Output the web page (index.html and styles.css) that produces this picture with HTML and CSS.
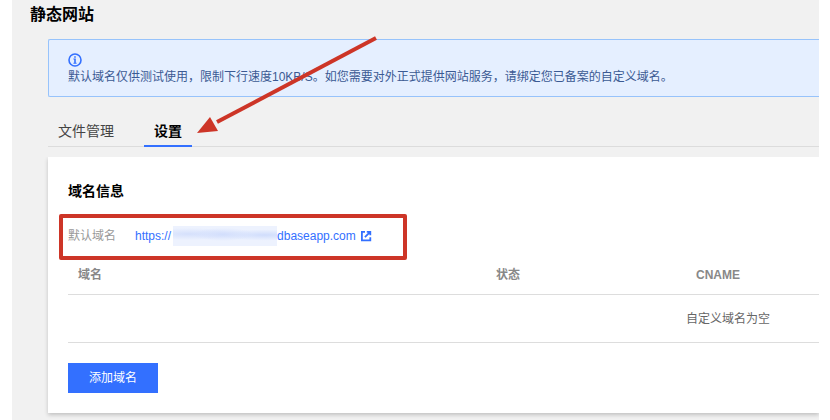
FILE: index.html
```html
<!DOCTYPE html>
<html lang="zh-CN">
<head>
<meta charset="utf-8">
<title>静态网站</title>
<link rel="stylesheet" href="styles.css">
</head>
<body>
<main class="page">
  <h1 class="page-title">静态网站</h1>
  <div class="content">
    <div class="notice">
      <svg class="notice-icon" viewBox="0 0 14 14" aria-hidden="true">
        <circle cx="7" cy="7" r="6" fill="none" stroke="#3370ff" stroke-width="1.6"/>
        <path d="M6.2 3.2h1.6v1.5H6.2zM5.4 5.6h2.4v4.2h.8v.9H5.4v-.9h.8V6.5h-.8z" fill="#3370ff"/>
      </svg>
      <p class="notice-text">默认域名仅供测试使用，限制下行速度10KB/S。如您需要对外正式提供网站服务，请绑定您已备案的自定义域名。</p>
    </div>
    <nav class="tabs">
      <a class="tab" href="#files">文件管理</a>
      <a class="tab active" href="#settings" aria-current="page">设置</a>
    </nav>
    <section class="card" id="settings">
      <h2 class="card-title">域名信息</h2>
      <div class="domain">
        <span class="domain-label">默认域名</span>
        <a class="domain-link" href="#domain">https://<span class="redacted"></span>dbaseapp.com<svg class="external" viewBox="0 0 12 12" aria-hidden="true"><path d="M5 1.8H1.9v8.5h8.4V7.2M6.8 1.8h3.5v3.5M10 2.1 4.9 7.2" fill="none" stroke="#3370ff" stroke-width="1.8"/></svg></a>
        <span class="highlight"></span>
      </div>
      <table class="domains">
        <thead>
          <tr><th class="col-domain">域名</th><th class="col-status">状态</th><th>CNAME</th></tr>
        </thead>
        <tbody>
          <tr><td colspan="2"></td><td class="empty">自定义域名为空</td></tr>
        </tbody>
      </table>
      <button class="add" type="button">添加域名</button>
    </section>
  </div>
  <svg class="arrow" viewBox="0 0 180 98" aria-hidden="true">
    <path d="M179 2 20 86" stroke="#cd3527" stroke-width="4" fill="none"/>
    <path d="M0 97 13 81 21 95z" fill="#cd3527"/>
  </svg>
</main>
</body>
</html>
```
FILE: styles.css
```css
* {
  box-sizing: border-box;
}

body {
  margin: 0;
  background: #fff;
  color: #000;
  font: 12px/18px "Liberation Sans", "Noto Sans CJK SC", sans-serif;
}

h1,
h2,
p {
  margin: 0;
}

a {
  text-decoration: none;
}

.page {
  position: relative;
  min-height: 100vh;
  margin: 0 11px 0 12px;
  padding-bottom: 7px;
  background: #f1f1f1;
}

.page-title {
  padding: 3px 18px 12px;
  font-size: 16px;
  line-height: 24px;
}

.content {
  padding-left: 36px;
}

.notice {
  padding: 13px 19px 9px;
  border: 1px solid #97c3fb;
  border-right: 0;
  border-radius: 2px 0 0 2px;
  background: #e5efff;
  color: #3b5a93;
}

.notice-icon {
  display: block;
  width: 14px;
  height: 14px;
}

.notice-text {
  line-height: 20px;
}

.tabs {
  display: flex;
  gap: 20px;
  margin: 20px 0 10px;
  border-bottom: 1px solid #dcdcdc;
}

.tab {
  margin-bottom: -1px;
  padding: 4px 10px 3px;
  border-bottom: 2px solid transparent;
  color: #444;
  font-size: 14px;
  line-height: 21px;
}

.tab.active {
  border-color: #3370ff;
  color: #000;
  font-weight: bold;
}

.card {
  padding: 20px 0 20px 20px;
  background: #fff;
  box-shadow: 0 2px 4px rgba(0, 0, 0, 0.2);
  clip-path: inset(0 0 -7px -7px);
}

.card-title {
  font-size: 14px;
  line-height: 28px;
}

.domain {
  position: relative;
  display: flex;
  align-items: center;
  gap: 19px;
  height: 44px;
  margin-top: 9px;
}

.domain-label {
  color: #999;
}

.domain-link {
  display: flex;
  align-items: center;
  color: #3370ff;
}

.redacted {
  width: 104px;
  height: 20px;
  margin-left: 2px;
  background:
    radial-gradient(ellipse at 48% 42%, #d2defc 0%, transparent 40%),
    radial-gradient(ellipse at 15% 40%, #d5e0fc 0%, transparent 36%),
    radial-gradient(ellipse at 88% 45%, #d0ddfc 0%, transparent 36%),
    #edf2fe;
}

.external {
  width: 12px;
  height: 12px;
  margin-left: 4px;
}

.highlight {
  position: absolute;
  top: 0;
  left: -9px;
  width: 348px;
  height: 46px;
  border: 4px solid #cd3527;
  border-radius: 2px;
  pointer-events: none;
}

.domains {
  width: 100%;
  margin-top: 2px;
  table-layout: fixed;
  border-collapse: collapse;
}

.domains th,
.domains td {
  padding: 6px 10px 10px;
  border-bottom: 1px solid #ddd;
  text-align: left;
}

.domains th {
  color: #888;
}

.col-domain {
  width: 418px;
}

.col-status {
  width: 200px;
}

.domains td.empty {
  padding: 15px 0 14px;
  color: #666;
}

.add {
  display: block;
  height: 30px;
  margin-top: 20px;
  padding: 0 21px;
  border: 0;
  background: #3370ff;
  color: #fff;
  font: inherit;
}

.arrow {
  position: absolute;
  top: 36px;
  left: 185px;
  width: 180px;
  height: 98px;
  pointer-events: none;
}
```
